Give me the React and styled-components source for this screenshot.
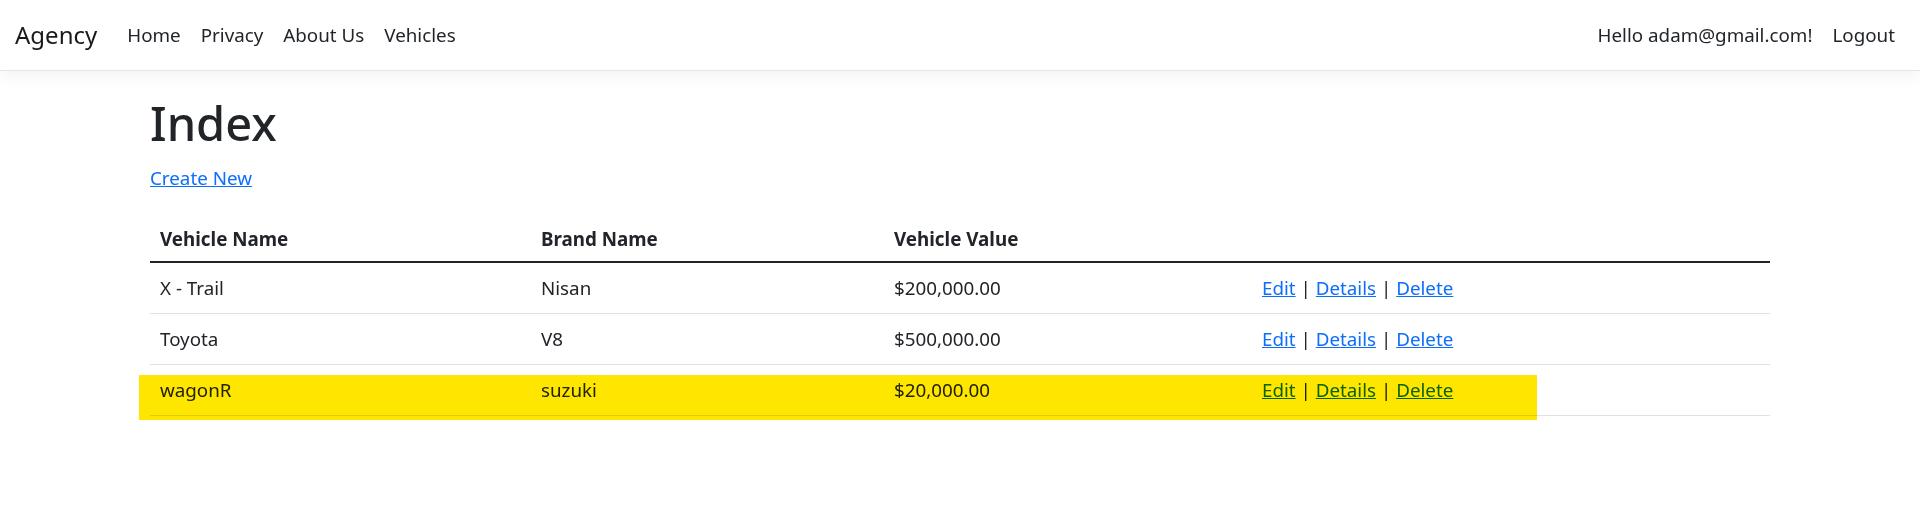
import React from "react";
import styled, { createGlobalStyle } from "styled-components";

const GlobalStyle = createGlobalStyle`
  html, body {
    margin: 0;
    padding: 0;
    background: #fff;
  }
  *, *::before, *::after {
    box-sizing: border-box;
  }
  body {
    font-family: "Noto Sans", "Open Sans", sans-serif;
    font-size: 18.8px;
    line-height: 30px;
    color: #212529;
  }
`;

const NavBar = styled.header`
  display: flex;
  align-items: center;
  height: 71px;
  padding: 0 15px;
  border-bottom: 1px solid #e5e5e5;
  box-shadow: 0 5px 15px rgba(0, 0, 0, 0.05);
  margin-bottom: 22px;
`;

const Brand = styled.a`
  font-size: 24px;
  color: rgba(0, 0, 0, 0.9);
  text-decoration: none;
  margin-right: 20px;
`;

const NavList = styled.nav`
  display: flex;
  align-items: center;
  flex: ${(props) => (props.grow ? 1 : "none")};
`;

const NavLink = styled.a`
  color: #212529;
  text-decoration: none;
  padding: 10px;
`;

const Main = styled.main`
  width: 1620px;
  margin: 0 auto;
`;

const Title = styled.h1`
  font-size: 47px;
  font-weight: 500;
  line-height: 60px;
  margin: 0 0 10px;
`;

const Para = styled.p`
  margin: 0 0 18px;
`;

const Link = styled.a`
  color: #0d6efd;
  text-decoration: underline;
`;

const TableWrap = styled.div`
  position: relative;
`;

const Table = styled.table`
  width: 100%;
  table-layout: fixed;
  border-collapse: collapse;
  margin-bottom: 20px;
`;

const Th = styled.th`
  text-align: left;
  vertical-align: bottom;
  font-weight: 700;
  padding: 13px 10px 7px;
  border-bottom: 2.5px solid #212529;
  width: ${(props) => props.width || "auto"};
`;

const Td = styled.td`
  padding: 10px;
  border-bottom: 1px solid #dee2e6;
`;

const Highlight = styled.div`
  position: absolute;
  left: -11px;
  top: 164px;
  width: 1398px;
  height: 45px;
  background: #ffe600;
  mix-blend-mode: multiply;
  pointer-events: none;
`;

const vehicles = [
  { id: 1, name: "X - Trail", brand: "Nisan", value: "$200,000.00" },
  { id: 2, name: "Toyota", brand: "V8", value: "$500,000.00" },
  { id: 3, name: "wagonR", brand: "suzuki", value: "$20,000.00" },
];

const App = () => {
  return (
    <>
      <GlobalStyle />
      <NavBar>
        <Brand href="#">Agency</Brand>
        <NavList grow>
          <NavLink href="#">Home</NavLink>
          <NavLink href="#">Privacy</NavLink>
          <NavLink href="#">About Us</NavLink>
          <NavLink href="#">Vehicles</NavLink>
        </NavList>
        <NavList>
          <NavLink href="#">Hello adam@gmail.com!</NavLink>
          <NavLink href="#">Logout</NavLink>
        </NavList>
      </NavBar>
      <Main>
        <Title>Index</Title>
        <Para>
          <Link href="#">Create New</Link>
        </Para>
        <TableWrap>
          <Table>
            <thead>
              <tr>
                <Th width="381px">Vehicle Name</Th>
                <Th width="353px">Brand Name</Th>
                <Th width="368px">Vehicle Value</Th>
                <Th></Th>
              </tr>
            </thead>
            <tbody>
              {vehicles.map((v) => (
                <tr key={v.id}>
                  <Td>{v.name}</Td>
                  <Td>{v.brand}</Td>
                  <Td>{v.value}</Td>
                  <Td>
                    <Link href="#">Edit</Link> |{" "}
                    <Link href="#">Details</Link> |{" "}
                    <Link href="#">Delete</Link>
                  </Td>
                </tr>
              ))}
            </tbody>
          </Table>
          <Highlight />
        </TableWrap>
      </Main>
    </>
  );
};

export default App;
